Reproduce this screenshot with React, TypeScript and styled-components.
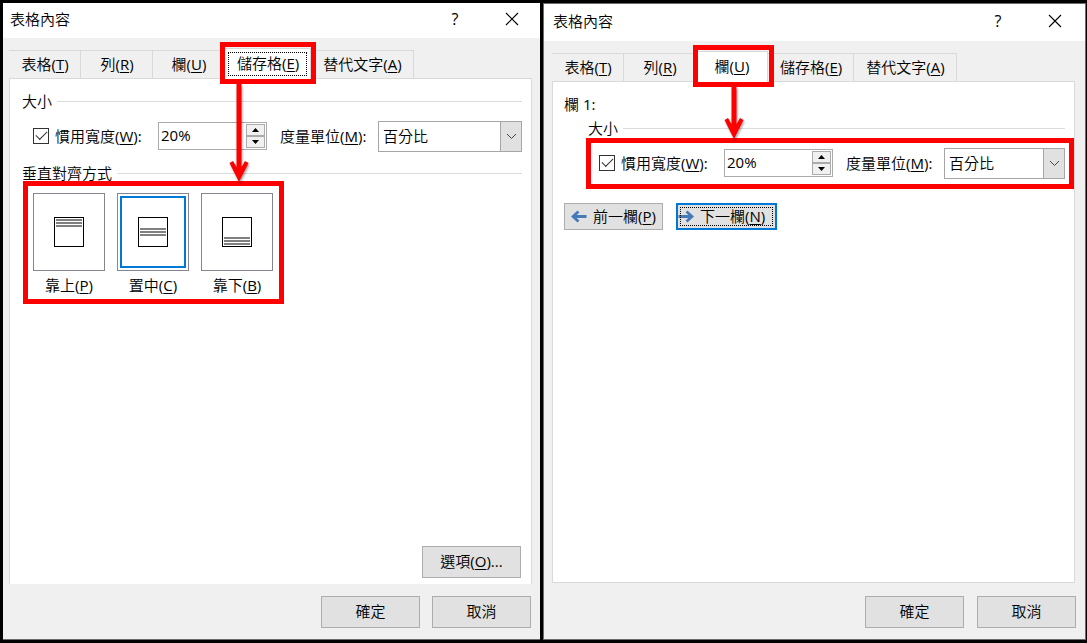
import React, { useId, useState } from 'react';
import styled, { createGlobalStyle, css } from 'styled-components';

const GlobalStyle = createGlobalStyle`
  *, *::before, *::after { box-sizing: border-box; }
  body {
    margin: 0;
    background: #000;
    color: #000;
    font: 350 15px/20px "Open Sans", "Noto Sans CJK TC", sans-serif;
  }
  button, input, select { font: inherit; color: inherit; margin: 0; }
  u { text-decoration-thickness: 1px; text-underline-offset: 2px; }
`;

const Page = styled.main`
  display: grid;
  grid-template-columns: minmax(0, 537fr) minmax(0, 543fr);
  gap: 3px;
  min-height: 100vh;
  padding: 3px 1px 3px 3px;
`;

const Dialog = styled.section<{ $framed?: boolean }>`
  display: flex;
  flex-direction: column;
  background: #f0f0f0;
  border: 0 solid #6b6b6b;
  border-width: ${(p) => (p.$framed ? '1px' : '0 0 1px')};
`;

const TitleBar = styled.header<{ $tall?: boolean }>`
  display: flex;
  align-items: center;
  height: ${(p) => (p.$tall ? 37 : 35)}px;
  padding: ${(p) => (p.$tall ? '0 18px 3px 9px' : '0 16px 4px 7px')};
  background: #fff;
`;

const Title = styled.h1`
  flex: 1;
  margin: 0;
  font-size: 15px;
  font-weight: inherit;
`;

const TitleButton = styled.button`
  display: grid;
  place-items: center;
  width: 24px;
  height: 24px;
  margin-left: 33px;
  padding: 0;
  border: 0;
  background: none;
  font-size: 16px;
  font-weight: 400;
`;

const Body = styled.div<{ $framed?: boolean }>`
  flex: 1;
  display: flex;
  flex-direction: column;
  padding: ${(p) => (p.$framed ? '12px 10px 0 8px' : '12px 8px 0 6px')};
`;

const TabList = styled.div`
  display: flex;
  height: 28px;
  position: relative;
  z-index: 1;
`;

const Tab = styled.button<{ $active: boolean }>`
  position: relative;
  min-width: 72px;
  height: 28px;
  padding: 0 11px 1px 12px;
  border: 1px solid #d9d9d9;
  border-width: 1px 1px 0 0;
  background: #f0f0f0;
  white-space: nowrap;
  ${(p) =>
    p.$active &&
    css`
      height: 31px;
      margin-top: -2px;
      padding-bottom: 2px;
      background: #fff;
      z-index: 2;
    `}
`;

const FocusDots = styled.span<{ $inset: number }>`
  position: absolute;
  inset: ${(p) => p.$inset}px;
  border: 1px dotted #000;
  pointer-events: none;
`;

const Highlight = styled.span<{ $inset: string }>`
  position: absolute;
  inset: ${(p) => p.$inset};
  border: 5px solid #fe0000;
  pointer-events: none;
`;

const ArrowSvg = styled.svg<{ $left: number }>`
  position: absolute;
  top: 35px;
  left: ${(p) => p.$left}px;
  filter: drop-shadow(1px 2px 1px rgba(0, 0, 0, 0.35));
  pointer-events: none;
`;

const Panel = styled.div<{ $framed?: boolean }>`
  flex: 1;
  display: flex;
  flex-direction: column;
  padding: ${(p) => (p.$framed ? '12px 9px 12px 11px' : '12px 9px 6px 12px')};
  border: 1px solid #dadada;
  border-bottom-width: ${(p) => (p.$framed ? 1 : 0)}px;
  background: #fff;
`;

const ColumnName = styled.div`
  margin-bottom: 4px;
`;

const Latin = styled.span`
  font-weight: 400;
`;

const Group = styled.fieldset<{ $indent?: boolean }>`
  min-width: 0;
  margin: 0 0 0 ${(p) => (p.$indent ? 24 : 0)}px;
  padding: 0;
  border: 0;
`;

const Legend = styled.legend`
  display: flex;
  align-items: center;
  gap: 5px;
  width: 100%;
  padding: 0;
  white-space: nowrap;
  &::after {
    content: '';
    flex: 1;
    height: 1px;
    background: #dcdcdc;
  }
`;

const FieldRow = styled.div`
  position: relative;
  display: flex;
  align-items: center;
  height: 31px;
  margin: 10px 0 0 11px;
  padding-bottom: 1px;
`;

const CheckLabel = styled.label`
  display: flex;
  align-items: center;
  gap: 6px;
  flex: 0 0 125px;
  white-space: nowrap;
`;

const CheckBox = styled.input`
  appearance: none;
  width: 16px;
  height: 16px;
  border: 1px solid #333;
  background: #fff;
  display: grid;
  place-items: center;
  &:checked::after {
    content: '';
    width: 11px;
    height: 6px;
    border: solid #333;
    border-width: 0 0 1px 1px;
    transform: translateY(-2px) rotate(-45deg);
  }
`;

const SpinBox = styled.div`
  display: flex;
  flex: 0 0 109px;
  min-width: 0;
  height: 28px;
  padding: 1px;
  border: 1px solid #ababab;
  background: #fff;
`;

const SpinInput = styled.input`
  flex: 1;
  width: 0;
  min-width: 0;
  padding: 0 1px 3px;
  border: 0;
  outline: 0;
  background: none;
  font-weight: 400;
`;

const SpinButtons = styled.div`
  display: flex;
  flex-direction: column;
  width: 19px;
`;

const SpinButton = styled.button`
  flex: 1;
  display: grid;
  place-items: center;
  padding: 0;
  border: 1px solid #ababab;
  background: #f0f0f0;
`;

const UnitLabel = styled.label`
  flex: 0 0 98px;
  margin-left: 13px;
  white-space: nowrap;
`;

const SelectBox = styled.div`
  flex: 1;
  align-self: flex-start;
  display: grid;
  min-width: 0;
  height: 31px;
  & > * { grid-area: 1 / 1; }
`;

const Select = styled.select`
  appearance: none;
  width: 100%;
  padding: 0 24px 1px 4px;
  border: 1px solid #a6a6a6;
  border-radius: 0;
  background: #fff;
`;

const SelectArrow = styled.span`
  justify-self: end;
  display: grid;
  place-items: center;
  width: 22px;
  border: 1px solid #a6a6a6;
  background: #e1e1e1;
  pointer-events: none;
`;

const AlignSection = styled.div`
  margin-top: 11px;
`;

const AlignRow = styled.div`
  position: relative;
  display: flex;
  gap: 12px;
  width: max-content;
  margin: 10px 0 0 11px;
`;

const AlignOption = styled.label`
  display: flex;
  flex-direction: column;
  align-items: center;
  gap: 4px;
  width: 72px;
  white-space: nowrap;
`;

const HiddenRadio = styled.input`
  appearance: none;
  position: absolute;
`;

const AlignTile = styled.span<{ $selected: boolean }>`
  display: grid;
  place-items: center;
  width: 72px;
  height: 78px;
  border: 1px solid #85858f;
  background: #fff;
  outline: ${(p) => (p.$selected ? '2px solid #0078d7' : 'none')};
  outline-offset: -5px;
`;

const Button = styled.button`
  width: 99px;
  height: 32px;
  padding: 0 0 2px;
  border: 1px solid #adadad;
  background: #e1e1e1;
  white-space: nowrap;
`;

const OptionsRow = styled.div`
  display: flex;
  justify-content: flex-end;
  margin-top: auto;
  padding-right: 1px;
`;

const NavRow = styled.div`
  display: flex;
  gap: 13px;
  margin-top: 24px;
`;

const NavButton = styled(Button)<{ $focused?: boolean }>`
  position: relative;
  display: flex;
  align-items: center;
  justify-content: center;
  gap: 6px;
  height: 27px;
  padding: 0 0 1px;
  ${(p) =>
    p.$focused &&
    css`
      width: 101px;
      border: 2px solid #0078d7;
      justify-content: flex-start;
    `}
`;

const Footer = styled.footer<{ $framed?: boolean }>`
  display: flex;
  justify-content: flex-end;
  gap: ${(p) => (p.$framed ? 13 : 12)}px;
  padding: ${(p) => (p.$framed ? 13 : 12)}px 9px 11px;
`;

const CloseIcon = () => (
  <svg width="14" height="14" viewBox="0 0 14 14" aria-hidden="true">
    <path d="M1 1l12 12M13 1L1 13" stroke="#000" strokeWidth="1.1" fill="none" />
  </svg>
);

const Arrow = ({ length, left }: { length: number; left: number }) => (
  <ArrowSvg $left={left} width="20" height={length} viewBox={`0 0 20 ${length}`} aria-hidden="true">
    <path
      d={`M7.5 0H12.5V${length - 15}L16 ${length - 21}L19.5 ${length - 19}L10 ${length}L0.5 ${length - 19}L4 ${length - 21}L7.5 ${length - 15}Z`}
      fill="#fe0000"
    />
  </ArrowSvg>
);

const NavArrow = ({ back }: { back?: boolean }) => (
  <svg width="16" height="13" viewBox="0 0 16 13" aria-hidden="true">
    <path
      d={back ? 'M15.5 6.5H2M7.5 1.5L2 6.5L7.5 11.5' : 'M0.5 6.5H14M8.5 1.5L14 6.5L8.5 11.5'}
      stroke="#4579b8"
      strokeWidth="2.8"
      fill="none"
    />
  </svg>
);

const AlignIcon = ({ offset }: { offset: number }) => (
  <svg width="30" height="30" viewBox="0 0 30 30" aria-hidden="true">
    <rect x="0.5" y="0.5" width="29" height="29" fill="#fff" stroke="#000" />
    {[0, 3, 6].map((y) => (
      <rect key={y} x="2" y={offset + y} width="26" height="2" fill="#808080" />
    ))}
  </svg>
);

const Caret = ({ down }: { down?: boolean }) => (
  <svg width="7" height="4" viewBox="0 0 7 4" aria-hidden="true">
    <path d={down ? 'M0 0H7L3.5 4Z' : 'M0 4H7L3.5 0Z'} fill="#000" />
  </svg>
);

const TABS = [
  ['表格', 'T'],
  ['列', 'R'],
  ['欄', 'U'],
  ['儲存格', 'E'],
  ['替代文字', 'A'],
];

const Mnemonic = ({ text, k, after = '' }: { text: string; k: string; after?: string }) => (
  <span>
    {text}
    <Latin>(<u>{k}</u>){after}</Latin>
  </span>
);

const DialogTitle = ({ tall }: { tall?: boolean }) => (
  <TitleBar $tall={tall}>
    <Title>表格內容</Title>
    <TitleButton aria-label="說明">?</TitleButton>
    <TitleButton aria-label="關閉"><CloseIcon /></TitleButton>
  </TitleBar>
);

const Tabs = ({ active, children }: { active: string; children: React.ReactNode }) => (
  <TabList role="tablist">
    {TABS.map(([text, k]) => (
      <Tab key={k} role="tab" aria-selected={k === active} $active={k === active}>
        <Mnemonic text={text} k={k} />
        {k === active && children}
      </Tab>
    ))}
  </TabList>
);

const WidthFields = ({ children }: { children?: React.ReactNode }) => {
  const id = useId();
  const [width, setWidth] = useState(20);
  return (
    <FieldRow>
      <CheckLabel>
        <CheckBox type="checkbox" defaultChecked />
        <Mnemonic text="慣用寬度" k="W" after=":" />
      </CheckLabel>
      <SpinBox>
        <SpinInput
          aria-label="慣用寬度"
          value={`${width}%`}
          onChange={(e) => setWidth(parseInt(e.target.value, 10) || 0)}
        />
        <SpinButtons>
          <SpinButton aria-label="增加" onClick={() => setWidth(width + 1)}><Caret /></SpinButton>
          <SpinButton aria-label="減少" onClick={() => setWidth(width - 1)}><Caret down /></SpinButton>
        </SpinButtons>
      </SpinBox>
      <UnitLabel htmlFor={id}><Mnemonic text="度量單位" k="M" after=":" /></UnitLabel>
      <SelectBox>
        <Select id={id}><option>百分比</option></Select>
        <SelectArrow>
          <svg width="11" height="7" viewBox="0 0 11 7" aria-hidden="true">
            <path d="M1 1L5.5 5.5L10 1" stroke="#444" fill="none" />
          </svg>
        </SelectArrow>
      </SelectBox>
      {children}
    </FieldRow>
  );
};

const ALIGNMENTS = [
  { text: '靠上', k: 'P', offset: 2 },
  { text: '置中', k: 'C', offset: 11 },
  { text: '靠下', k: 'B', offset: 20 },
];

const CellDialog = () => {
  const [align, setAlign] = useState('C');
  return (
    <Dialog>
      <DialogTitle />
      <Body>
        <Tabs active="E">
          <FocusDots $inset={3} />
          <Highlight $inset="-7px -6px -5px -5px" />
          <Arrow length={98} left={4} />
        </Tabs>
        <Panel>
          <Group>
            <Legend>大小</Legend>
            <WidthFields />
          </Group>
          <AlignSection>
            <Group>
              <Legend>垂直對齊方式</Legend>
              <AlignRow>
                {ALIGNMENTS.map(({ text, k, offset }) => (
                  <AlignOption key={k}>
                    <HiddenRadio type="radio" name="valign" checked={align === k} onChange={() => setAlign(k)} />
                    <AlignTile $selected={align === k}><AlignIcon offset={offset} /></AlignTile>
                    <Mnemonic text={text} k={k} />
                  </AlignOption>
                ))}
                <Highlight $inset="-12px -11px -9px -10px" />
              </AlignRow>
            </Group>
          </AlignSection>
          <OptionsRow>
            <Button><Mnemonic text="選項" k="O" after="..." /></Button>
          </OptionsRow>
        </Panel>
      </Body>
      <Footer>
        <Button>確定</Button>
        <Button>取消</Button>
      </Footer>
    </Dialog>
  );
};

const ColumnDialog = () => (
  <Dialog $framed>
    <DialogTitle tall />
    <Body $framed>
      <Tabs active="U">
        <Highlight $inset="-7px -7px -5px -3px" />
        <Arrow length={52} left={28} />
      </Tabs>
      <Panel $framed>
        <ColumnName>欄<Latin> 1:</Latin></ColumnName>
        <Group $indent>
          <Legend>大小</Legend>
          <WidthFields>
            <Highlight $inset="-10px -9px -10px -13px" />
          </WidthFields>
        </Group>
        <NavRow>
          <NavButton><NavArrow back /><Mnemonic text="前一欄" k="P" /></NavButton>
          <NavButton $focused>
            <NavArrow />
            <Mnemonic text="下一欄" k="N" />
            <FocusDots $inset={2} />
          </NavButton>
        </NavRow>
      </Panel>
    </Body>
    <Footer $framed>
      <Button>確定</Button>
      <Button>取消</Button>
    </Footer>
  </Dialog>
);

export default function App() {
  return (
    <>
      <GlobalStyle />
      <Page>
        <CellDialog />
        <ColumnDialog />
      </Page>
    </>
  );
}
